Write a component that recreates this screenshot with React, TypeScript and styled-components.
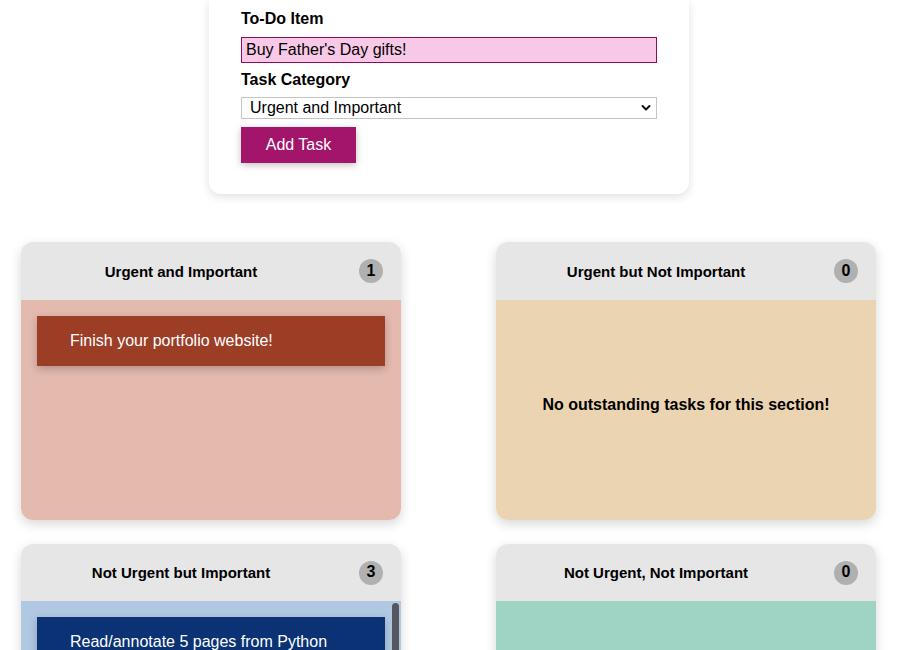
import React from "react";
import styled, { createGlobalStyle } from "styled-components";

const GlobalStyle = createGlobalStyle`
  html, body { margin: 0; padding: 0; background: #ffffff; }
  body { font-family: "Liberation Sans", Arial, Helvetica, sans-serif; color: #000; }
  * { box-sizing: border-box; }
`;

const Page = styled.div`
  width: 898px;
  display: flex;
  flex-direction: column;
  align-items: center;
  padding-bottom: 40px;
`;

const FormCard = styled.form`
  width: 480px;
  background: #fff;
  border-radius: 0 0 12px 12px;
  box-shadow: 0 3px 10px rgba(0, 0, 0, 0.12);
  padding: 10px 32px 31px;
  display: flex;
  flex-direction: column;
  align-items: flex-start;
`;

const Label = styled.label<{ $top?: number; $bottom?: number }>`
  display: block;
  font-size: 16px;
  line-height: 18px;
  font-weight: 700;
  margin-top: ${(p) => p.$top ?? 0}px;
  margin-bottom: ${(p) => p.$bottom ?? 9}px;
`;

const TextInput = styled.input`
  width: 416px;
  height: 26px;
  background: #f8c8e7;
  border: 1px solid #8e0a5c;
  padding: 0 4px;
  font-family: "Liberation Sans", Arial, sans-serif;
  font-size: 16px;
  color: #000;
  outline: none;
`;

const SelectWrap = styled.div`
  position: relative;
  width: 416px;
  height: 22px;
`;

const Select = styled.select`
  appearance: none;
  -webkit-appearance: none;
  width: 100%;
  height: 22px;
  border: 1px solid #c4c4c4;
  border-radius: 0;
  background: #fff;
  padding: 0 0 1px 8px;
  font-family: "Liberation Sans", Arial, sans-serif;
  font-size: 16px;
  color: #000;
  outline: none;
`;

const Chevron = styled.svg`
  position: absolute;
  right: 6px;
  top: 7px;
  pointer-events: none;
`;

const AddButton = styled.button`
  margin-top: 8px;
  width: 115px;
  height: 36px;
  border: none;
  background: #a3156a;
  color: #fff;
  font-family: "Liberation Sans", Arial, sans-serif;
  font-size: 16px;
  box-shadow: 0 2px 7px rgba(0, 0, 0, 0.25);
  cursor: pointer;
`;

const Grid = styled.div`
  align-self: flex-start;
  margin: 48px 0 0 21px;
  display: grid;
  grid-template-columns: 380px 380px;
  column-gap: 95px;
  row-gap: 24px;
`;

const Quadrant = styled.section`
  border-radius: 12px;
  overflow: hidden;
  box-shadow: 0 4px 12px rgba(0, 0, 0, 0.16);
  display: flex;
  flex-direction: column;
`;

const Header = styled.header<{ $h: number }>`
  height: ${(p) => p.$h}px;
  background: #e6e6e6;
  display: flex;
  align-items: center;
  padding: 0 18px;
`;

const Title = styled.h2`
  flex: 1;
  margin: 0;
  text-align: center;
  font-size: 15px;
  font-weight: 700;
`;

const Badge = styled.span`
  margin-left: 36px;
  width: 24px;
  height: 24px;
  border-radius: 50%;
  background: #b0b0b0;
  display: flex;
  align-items: center;
  justify-content: center;
  font-size: 16px;
  font-weight: 700;
  line-height: 1;
  padding-bottom: 1px;
`;

const Body = styled.div<{ $bg: string }>`
  position: relative;
  height: 220px;
  background: ${(p) => p.$bg};
  padding: 16px;
  overflow: hidden;
  display: flex;
  flex-direction: column;
  gap: 16px;
`;

const ScrollThumb = styled.div`
  position: absolute;
  top: 2px;
  right: 2px;
  width: 7px;
  height: 150px;
  border-radius: 4px;
  background: #55585e;
`;

const Empty = styled.div`
  flex: 1;
  display: flex;
  align-items: center;
  justify-content: center;
  font-size: 16px;
  font-weight: 700;
  padding-bottom: 10px;
`;

const Task = styled.div<{ $bg: string }>`
  flex-shrink: 0;
  background: ${(p) => p.$bg};
  color: #fff;
  font-size: 16px;
  line-height: 18px;
  padding: 16px 32px 16px 33px;
  box-shadow: 0 3px 8px rgba(0, 0, 0, 0.22);
`;

type Q = {
  title: string;
  bg: string;
  taskBg: string;
  tasks: string[];
  header: number;
};

const quadrants: Q[] = [
  { title: "Urgent and Important", bg: "#e4b9ae", taskBg: "#9c3d26", tasks: ["Finish your portfolio website!"], header: 58 },
  { title: "Urgent but Not Important", bg: "#ebd4b2", taskBg: "#a86a1c", tasks: [], header: 58 },
  {
    title: "Not Urgent but Important",
    bg: "#b1c8e2",
    taskBg: "#0b3275",
    tasks: [
      "Read/annotate 5 pages from Python Crash Course",
      "Practice JavaScript array methods",
      "Go for a 30 minute run",
    ],
    header: 57,
  },
  { title: "Not Urgent, Not Important", bg: "#9fd3c3", taskBg: "#1f7a62", tasks: [], header: 57 },
];

export default function App() {
  return (
    <>
      <GlobalStyle />
      <Page>
        <FormCard onSubmit={(e) => e.preventDefault()}>
          <Label htmlFor="todo">To-Do Item</Label>
          <TextInput id="todo" defaultValue="Buy Father's Day gifts!" />
          <Label htmlFor="cat" $top={8} $bottom={8}>Task Category</Label>
          <SelectWrap>
            <Select id="cat" defaultValue="ui">
              <option value="ui">Urgent and Important</option>
              <option value="un">Urgent but Not Important</option>
              <option value="ni">Not Urgent but Important</option>
              <option value="nn">Not Urgent, Not Important</option>
            </Select>
            <Chevron width="10" height="8" viewBox="0 0 10 8">
              <path d="M1.5 2 L5 5.5 L8.5 2" fill="none" stroke="#111" strokeWidth="2" strokeLinecap="round" strokeLinejoin="round" />
            </Chevron>
          </SelectWrap>
          <AddButton type="submit">Add Task</AddButton>
        </FormCard>
        <Grid>
          {quadrants.map((q) => (
            <Quadrant key={q.title}>
              <Header $h={q.header}>
                <Title>{q.title}</Title>
                <Badge>{q.tasks.length}</Badge>
              </Header>
              <Body $bg={q.bg}>
                {q.tasks.length === 0 ? (
                  <Empty>No outstanding tasks for this section!</Empty>
                ) : (
                  q.tasks.map((t) => (
                    <Task key={t} $bg={q.taskBg}>
                      {t}
                    </Task>
                  ))
                )}
                {q.tasks.length > 1 && <ScrollThumb />}
              </Body>
            </Quadrant>
          ))}
        </Grid>
      </Page>
    </>
  );
}
